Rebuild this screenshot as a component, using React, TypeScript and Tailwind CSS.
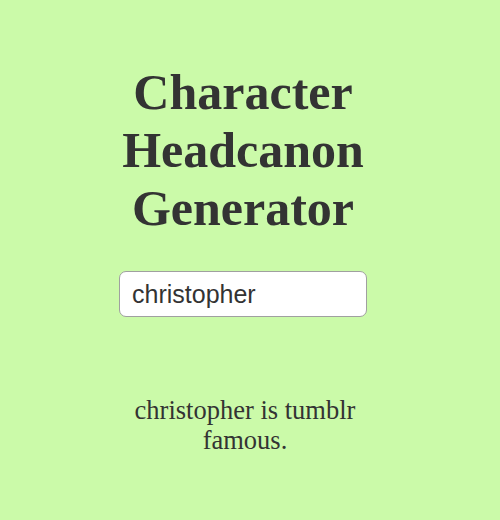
export default function App() {
  return (
    <div className="min-h-[520px] w-full bg-[#cbfaa9] text-[#333]">
      <div className="mx-auto flex w-[270px] -translate-x-[7px] flex-col items-center pt-[63px]">
        <h1 className="text-center text-[50px] font-bold leading-[58px] [font-family:'Liberation_Serif',serif]">
          Character Headcanon Generator
        </h1>
        <input
          defaultValue="christopher"
          className="mt-[34px] h-[46px] w-[248px] rounded-[7px] border border-[#a0a0a0] bg-white px-[12px] text-[25px] text-[#333] outline-none [font-family:'Liberation_Sans',sans-serif]"
        />
        <p className="mt-[78px] w-[240px] translate-x-[2px] text-center text-[26.5px] leading-[30px] [font-family:'Liberation_Serif',serif]">
          christopher is tumblr famous.
        </p>
      </div>
    </div>
  );
}
